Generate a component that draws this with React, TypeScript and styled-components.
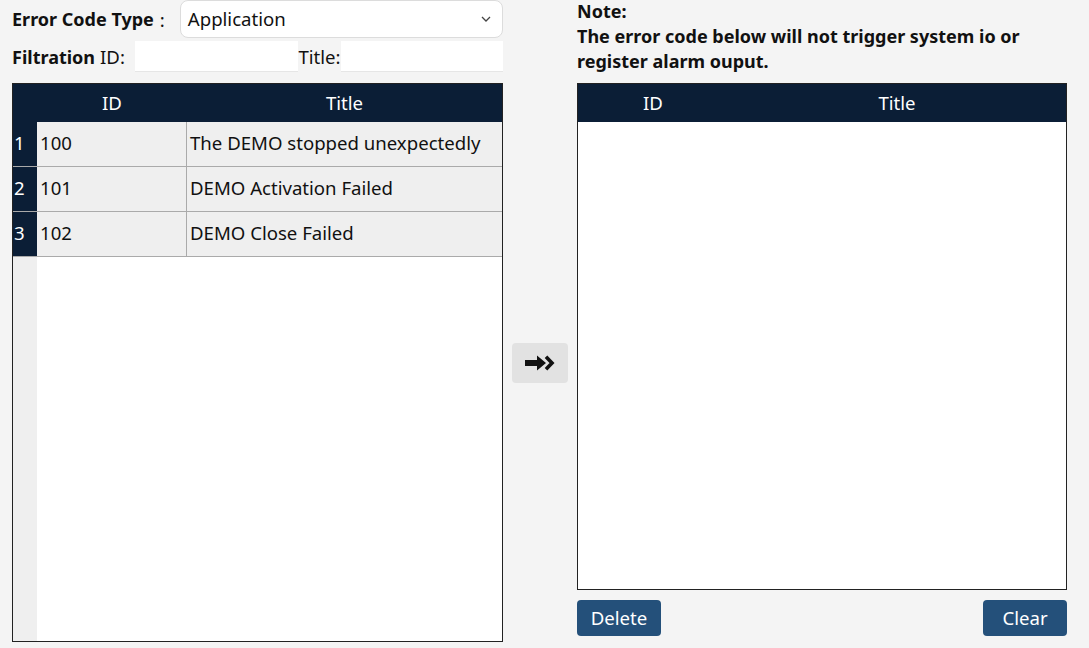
import styled, { createGlobalStyle } from "styled-components";

const GlobalStyle = createGlobalStyle`
  html, body {
    margin: 0;
    padding: 0;
    background: #f4f4f4;
  }
  body {
    font-family: "Noto Sans", "Open Sans", sans-serif;
    color: #111;
  }
`;

const Page = styled.div`
  display: flex;
  height: 648px;
  box-sizing: border-box;
  padding: 0 22px 0 12px;
`;

const LeftColumn = styled.div`
  width: 491px;
  display: flex;
  flex-direction: column;
  padding-bottom: 6px;
`;

const MiddleColumn = styled.div`
  width: 74px;
  display: flex;
  align-items: center;
  justify-content: center;
`;

const RightColumn = styled.div`
  flex: 1;
  display: flex;
  flex-direction: column;
  padding-bottom: 12px;
`;

const FieldRow = styled.div<{ $height: number; $gap?: number }>`
  display: flex;
  align-items: center;
  height: ${(p) => p.$height}px;
  margin-top: ${(p) => p.$gap ?? 0}px;
  font-size: 18px;
`;

const Label = styled.span<{ $bold?: boolean; $space?: number }>`
  font-weight: ${(p) => (p.$bold ? 700 : 400)};
  font-size: ${(p) => (p.$bold ? 18 : 18.6)}px;
  white-space: nowrap;
  margin-right: ${(p) => p.$space ?? 0}px;
`;

const Select = styled.div`
  flex: 1;
  height: 38px;
  box-sizing: border-box;
  background: #fff;
  border: 1px solid #dcdcdc;
  border-radius: 8px;
  display: flex;
  align-items: center;
  justify-content: space-between;
  padding: 0 10px 1px 7px;
  font-size: 18.6px;
`;

const TextInput = styled.div<{ $width: number }>`
  width: ${(p) => p.$width}px;
  height: 31px;
  background: #fff;
  border-bottom: 1px solid #e6e6e6;
  box-sizing: border-box;
`;

const Spacer = styled.div`
  height: 11px;
`;

const Table = styled.div`
  flex: 1;
  background: #fff;
  border: 1px solid #222;
  display: flex;
  flex-direction: column;
  font-size: 18.6px;
  overflow: hidden;
`;

const HeaderRow = styled.div<{ $cols: string }>`
  display: grid;
  grid-template-columns: ${(p) => p.$cols};
  height: 38px;
  flex-shrink: 0;
  background: #0b1e36;
  color: #fff;
  align-items: center;
  text-align: center;
  padding-bottom: 2px;
  box-sizing: border-box;
`;

const Body = styled.div<{ $numbered?: boolean }>`
  flex: 1;
  display: flex;
  flex-direction: column;
  background: ${(p) =>
    p.$numbered
      ? "linear-gradient(to right, #efefef 24px, #fff 24px)"
      : "#fff"};
`;

const DataRow = styled.div<{ $cols: string }>`
  display: grid;
  grid-template-columns: ${(p) => p.$cols};
  height: 45px;
  background: #efefef;
  border-bottom: 1px solid #aaa;
  box-sizing: border-box;
`;

const NumCell = styled.div`
  background: #0b1e36;
  color: #fff;
  display: flex;
  align-items: center;
  padding: 0 0 3px 1px;
`;

const Cell = styled.div<{ $divider?: boolean }>`
  display: flex;
  align-items: center;
  padding: 0 0 3px 3px;
  border-right: ${(p) => (p.$divider ? "1px solid #aaa" : "none")};
  white-space: nowrap;
`;

const NoteText = styled.div`
  height: 84px;
  font-size: 18px;
  font-weight: 700;
  line-height: 25px;
  margin-top: -1px;
`;

const ArrowButton = styled.button`
  width: 56px;
  height: 40px;
  border: none;
  border-radius: 4px;
  background: #e2e2e2;
  display: flex;
  align-items: center;
  justify-content: center;
  margin-top: 78px;
  padding: 0;
`;

const ButtonBar = styled.div`
  display: flex;
  justify-content: space-between;
  margin-top: 10px;
`;

const ActionButton = styled.button`
  width: 84px;
  height: 36px;
  border: none;
  border-radius: 4px;
  background: #24507a;
  color: #fff;
  font-family: inherit;
  font-size: 18.6px;
  padding: 0 0 2px;
`;

const Chevron = () => (
  <svg width="12" height="8" viewBox="0 0 12 8">
    <path d="M2 2 L6 6 L10 2" fill="none" stroke="#444" strokeWidth="1.3" />
  </svg>
);

const ArrowIcon = () => (
  <svg width="30" height="18" viewBox="0 0 30 18">
    <path d="M0 6 H12 V1.5 L21 9 L12 16.5 V12 H0 Z" fill="#111" />
    <path
      d="M21 2.8 L27 9 L21 15.2"
      fill="none"
      stroke="#111"
      strokeWidth="3.6"
    />
  </svg>
);

const rows = [
  { id: "100", title: "The DEMO stopped unexpectedly" },
  { id: "101", title: "DEMO Activation Failed" },
  { id: "102", title: "DEMO Close Failed" },
];

const leftCols = "24px 150px 1fr";

export default function App() {
  return (
    <>
      <GlobalStyle />
      <Page>
        <LeftColumn>
          <FieldRow $height={38}>
            <Label $bold $space={6}>Error Code Type</Label>
            <Label $space={15}>:</Label>
            <Select>
              <span>Application</span>
              <Chevron />
            </Select>
          </FieldRow>
          <FieldRow $height={31} $gap={3}>
            <Label $bold $space={5}>Filtration</Label>
            <Label $space={10}>ID:</Label>
            <TextInput $width={164} />
            <Label>Title:</Label>
            <TextInput $width={163} />
          </FieldRow>
          <Spacer />
          <Table>
            <HeaderRow $cols={leftCols}>
              <span />
              <span>ID</span>
              <span>Title</span>
            </HeaderRow>
            <Body $numbered>
              {rows.map((r, i) => (
                <DataRow key={r.id} $cols={leftCols}>
                  <NumCell>{i + 1}</NumCell>
                  <Cell $divider>{r.id}</Cell>
                  <Cell>{r.title}</Cell>
                </DataRow>
              ))}
            </Body>
          </Table>
        </LeftColumn>
        <MiddleColumn>
          <ArrowButton>
            <ArrowIcon />
          </ArrowButton>
        </MiddleColumn>
        <RightColumn>
          <NoteText>
            Note:
            <br />
            The error code below will not trigger system io or
            <br />
            register alarm ouput.
          </NoteText>
          <Table>
            <HeaderRow $cols="150px 1fr">
              <span>ID</span>
              <span>Title</span>
            </HeaderRow>
            <Body />
          </Table>
          <ButtonBar>
            <ActionButton>Delete</ActionButton>
            <ActionButton>Clear</ActionButton>
          </ButtonBar>
        </RightColumn>
      </Page>
    </>
  );
}
